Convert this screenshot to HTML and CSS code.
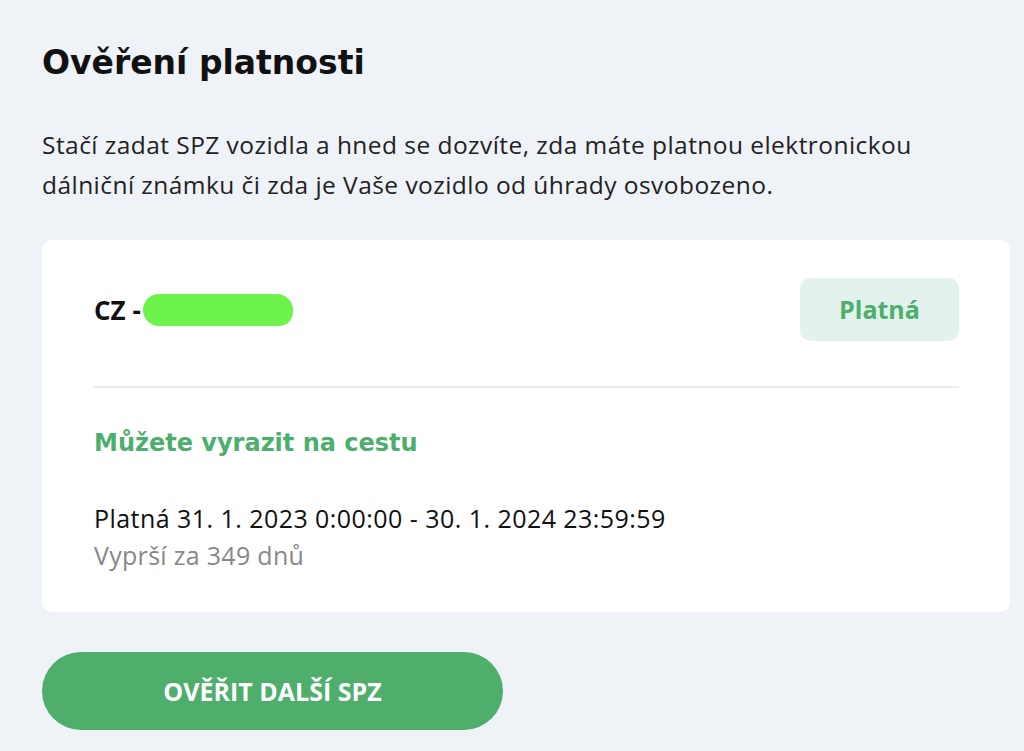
FILE: index.html
```html
<!DOCTYPE html>
<html lang="cs">

<head>
    <meta charset="UTF-8">
    <meta name="viewport" content="width=device-width, initial-scale=1.0">
    <title>Ověření platnosti</title>
    <link rel="stylesheet" href="styles.css">
</head>

<body>
    <div class="page">
        <h1 class="title">Ověření platnosti</h1>
        <p class="intro">Stačí zadat SPZ vozidla a hned se dozvíte, zda máte platnou elektronickou dálniční známku či zda je Vaše vozidlo od úhrady osvobozeno.</p>

        <div class="card">
            <div class="card-head">
                <div class="plate">CZ - <span class="blur"></span></div>
                <div class="badge">Platná</div>
            </div>
            <div class="card-body">
                <div class="ok">Můžete vyrazit na cestu</div>
                <div class="range">Platná 31. 1. 2023 0:00:00 - 30. 1. 2024 23:59:59</div>
                <div class="expire">Vyprší za 349 dnů</div>
            </div>
        </div>

        <button class="btn">Ověřit další SPZ</button>
    </div>
</body>

</html>
```

FILE: styles.css
```css
* {
    margin: 0;
    padding: 0;
    box-sizing: border-box;
}

body {
    background-color: #eff2f7;
    font-family: "Open Sans", "Liberation Sans", sans-serif;
    color: #111;
}

.page {
    width: 968px;
    margin-left: 42px;
    padding-top: 38px;
}

.title {
    font-family: "DejaVu Sans", "Noto Sans", sans-serif;
    font-size: 33px;
    font-weight: bold;
    line-height: 50px;
    color: #111;
}

.intro {
    margin-top: 37px;
    width: 910px;
    font-size: 24.5px;
    letter-spacing: 0.45px;
    line-height: 40px;
    color: #222;
}

.card {
    margin-top: 35px;
    background-color: #fff;
    border-radius: 10px;
    padding: 38px 51px 38px 52px;
}

.card-head {
    display: flex;
    justify-content: space-between;
    align-items: center;
    padding-bottom: 45px;
    border-bottom: 2px solid #ebebeb;
}

.plate {
    display: flex;
    align-items: center;
    font-size: 26px;
    font-weight: bold;
    color: #111;
}

.blur {
    display: inline-block;
    width: 150px;
    height: 32px;
    margin-left: 2px;
    background-color: #6ef24c;
    border-radius: 16px 16px 14px 16px;
}

.badge {
    width: 159px;
    height: 63px;
    line-height: 63px;
    text-align: center;
    background-color: #e3f2ec;
    border-radius: 10px;
    color: #4caf6e;
    font-size: 25px;
    font-weight: bold;
}

.card-body {
    padding-top: 37px;
}

.ok {
    font-family: "DejaVu Sans", "Noto Sans", sans-serif;
    font-size: 24px;
    font-weight: bold;
    color: #4caf6e;
    line-height: 36px;
}

.range {
    margin-top: 39px;
    font-size: 25px;
    letter-spacing: 0.45px;
    line-height: 37px;
    color: #111;
}

.expire {
    font-size: 25px;
    letter-spacing: 0.3px;
    line-height: 37px;
    color: #888;
}

.btn {
    margin-top: 40px;
    width: 461px;
    height: 78px;
    border: none;
    border-radius: 39px;
    background-color: #50ae6c;
    color: #fff;
    font-family: "Open Sans", "Liberation Sans", sans-serif;
    font-size: 25px;
    font-weight: bold;
    text-transform: uppercase;
}
```
